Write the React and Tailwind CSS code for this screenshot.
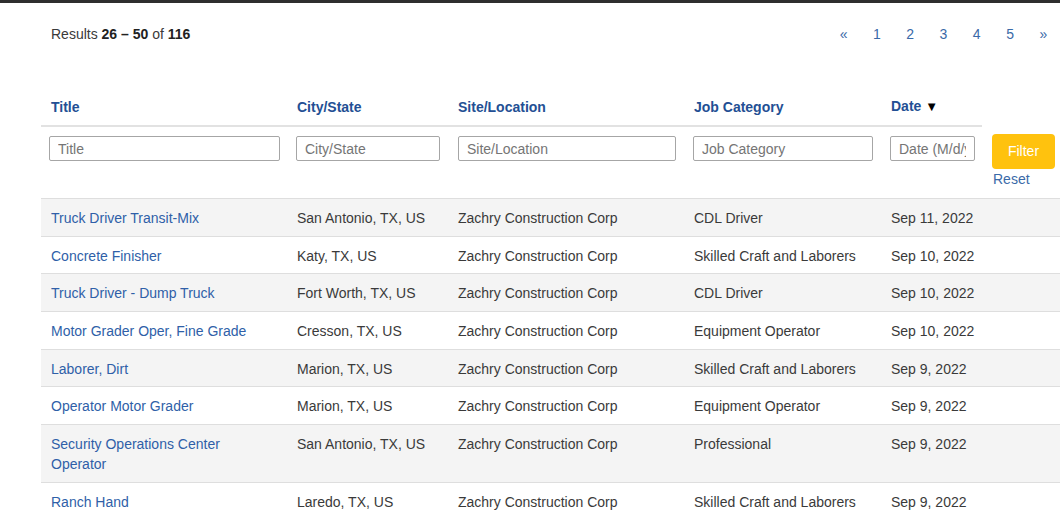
import React from 'react'

const jobs = [
  { title: 'Truck Driver Transit-Mix', city: 'San Antonio, TX, US', category: 'CDL Driver', date: 'Sep 11, 2022' },
  { title: 'Concrete Finisher', city: 'Katy, TX, US', category: 'Skilled Craft and Laborers', date: 'Sep 10, 2022' },
  { title: 'Truck Driver - Dump Truck', city: 'Fort Worth, TX, US', category: 'CDL Driver', date: 'Sep 10, 2022' },
  { title: 'Motor Grader Oper, Fine Grade', city: 'Cresson, TX, US', category: 'Equipment Operator', date: 'Sep 10, 2022' },
  { title: 'Laborer, Dirt', city: 'Marion, TX, US', category: 'Skilled Craft and Laborers', date: 'Sep 9, 2022' },
  { title: 'Operator Motor Grader', city: 'Marion, TX, US', category: 'Equipment Operator', date: 'Sep 9, 2022' },
  { title: 'Security Operations Center Operator', city: 'San Antonio, TX, US', category: 'Professional', date: 'Sep 9, 2022' },
  { title: 'Ranch Hand', city: 'Laredo, TX, US', category: 'Skilled Craft and Laborers', date: 'Sep 9, 2022' },
]

const pages = ['«', '1', '2', '3', '4', '5', '»']

export default function App() {
  return (
    <div className="h-[517px] w-[1060px] overflow-hidden bg-white text-[14px] text-[#3a3a3a] font-['Liberation_Sans',Arial,sans-serif]">
      <div className="h-[3px] bg-[#2e2e2e]" />

      {/* results + pagination */}
      <div className="mt-[21px] flex items-center justify-between leading-[20px]">
        <div className="pl-[51px]">
          Results <b className="text-[#222]">26 – 50</b> of <b className="text-[#222]">116</b>
        </div>
        <div className="flex">
          {pages.map((p, i) => (
            <a key={i} href="#" className="w-[33.3px] text-center text-[#3a6aa8]">{p}</a>
          ))}
        </div>
      </div>

      <div className="mt-[44px] ml-[41px] w-[1060px]">
        <table className="table-fixed border-collapse w-[1041px]">
          <colgroup>
            <col className="w-[246px]" />
            <col className="w-[161px]" />
            <col className="w-[236px]" />
            <col className="w-[197px]" />
            <col className="w-[101px]" />
            <col className="w-[100px]" />
          </colgroup>
          <thead>
            <tr className="text-left text-[#234f94] font-bold leading-[20px]">
              <th className="h-[38px] px-[10px] align-middle border-b-2 border-[#e2e2e2]">Title</th>
              <th className="px-[10px] align-middle border-b-2 border-[#e2e2e2]">City/State</th>
              <th className="px-[10px] align-middle border-b-2 border-[#e2e2e2]">Site/Location</th>
              <th className="px-[10px] align-middle border-b-2 border-[#e2e2e2]">Job Category</th>
              <th className="px-[10px] align-middle border-b-2 border-[#e2e2e2] whitespace-nowrap">Date <span className="text-black text-[13px]">▼</span></th>
              <th />
            </tr>
            <tr className="align-top">
              <td className="pt-[9px] pl-[8px]">
                <input placeholder="Title" className="w-[231px] h-[25px] px-[8px] border border-[#a6a6a6] rounded-[2px] placeholder:text-[#757575] outline-none" />
              </td>
              <td className="pt-[9px] pl-[9px]">
                <input placeholder="City/State" className="w-[144px] h-[25px] px-[8px] border border-[#a6a6a6] rounded-[2px] placeholder:text-[#757575] outline-none" />
              </td>
              <td className="pt-[9px] pl-[10px]">
                <input placeholder="Site/Location" className="w-[218px] h-[25px] px-[8px] border border-[#a6a6a6] rounded-[2px] placeholder:text-[#757575] outline-none" />
              </td>
              <td className="pt-[9px] pl-[9px]">
                <input placeholder="Job Category" className="w-[180px] h-[25px] px-[8px] border border-[#a6a6a6] rounded-[2px] placeholder:text-[#757575] outline-none" />
              </td>
              <td className="pt-[9px] pl-[9px]">
                <input placeholder="Date (M/d/yyyy)" className="w-[85px] h-[25px] px-[8px] border border-[#a6a6a6] rounded-[2px] placeholder:text-[#757575] outline-none" />
              </td>
              <td className="pt-[8px] pl-[10px] pb-[9px]">
                <button className="w-[63px] h-[35px] rounded-[4px] bg-[#ffc20e] text-white">Filter</button>
                <a href="#" className="mt-[1px] block pl-[1px] leading-[19px] text-[#3a6aa8]">Reset</a>
              </td>
            </tr>
          </thead>
          <tbody className="leading-[20px]">
            {jobs.map((job, i) => (
              <tr key={i} className={`border-t border-[#dedede] align-top ${i % 2 === 0 ? 'bg-[#f4f4f4]' : 'bg-white'}`}>
                <td className="pt-[9px] pb-[7.7px] px-[10px]">
                  <a href="#" className="text-[#2f5fa8]">{job.title}</a>
                </td>
                <td className="pt-[9px] pb-[7.7px] px-[10px]">{job.city}</td>
                <td className="pt-[9px] pb-[7.7px] px-[10px]">Zachry Construction Corp</td>
                <td className="pt-[9px] pb-[7.7px] px-[10px]">{job.category}</td>
                <td className="pt-[9px] pb-[7.7px] px-[10px] whitespace-nowrap">{job.date}</td>
                <td />
              </tr>
            ))}
          </tbody>
        </table>
      </div>
    </div>
  )
}
